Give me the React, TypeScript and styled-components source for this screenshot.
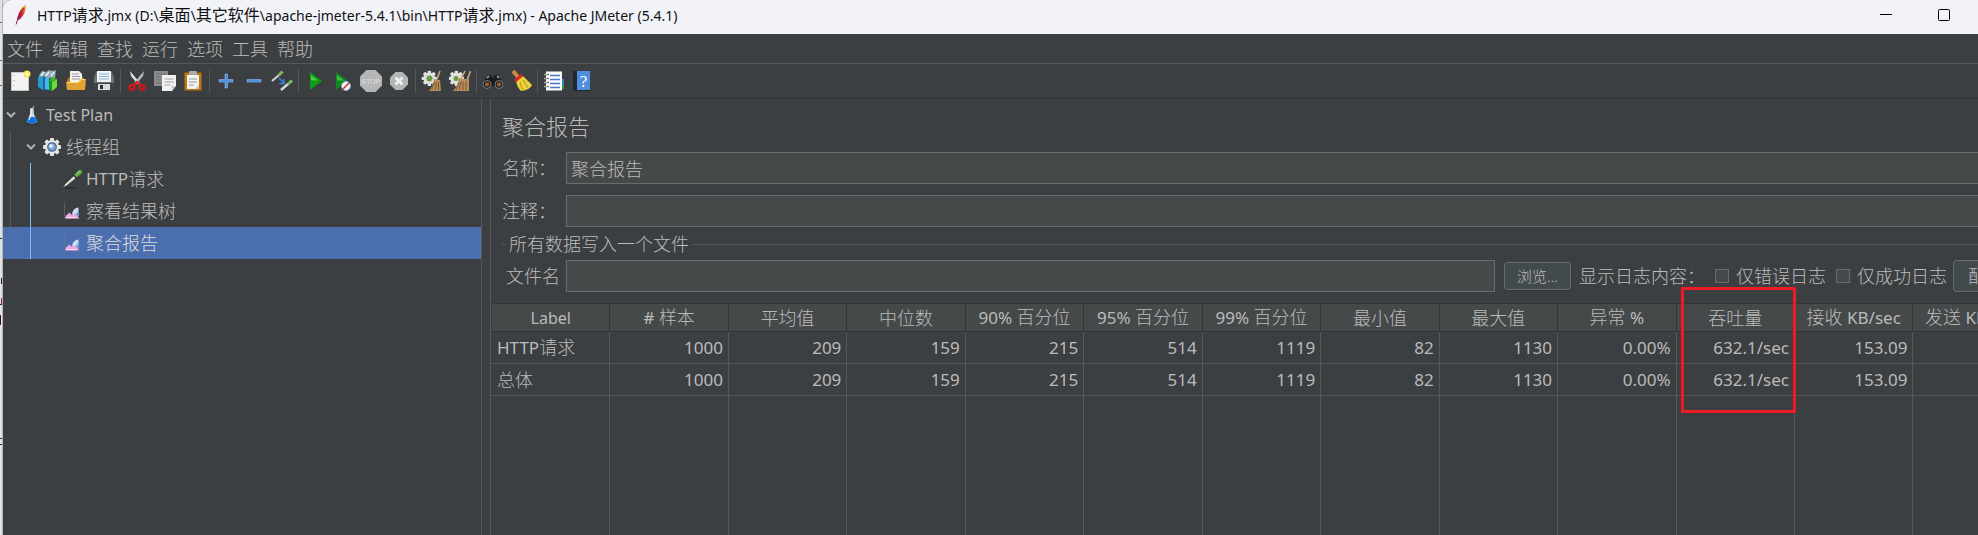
import React from "react";
import styled, { createGlobalStyle } from "styled-components";

const color = {
  base: "#3c3f41",
  field: "#45494a",
  header: "#45494a",
  line: "#555759",
  dark: "#323436",
  text: "#bbbbbb",
  border: "#6a6c6e",
  selected: "#4b6eaf",
};

const GlobalStyle = createGlobalStyle`
  *, *::before, *::after { box-sizing: border-box; }
  body {
    margin: 0;
    background: ${color.base};
    color: ${color.text};
    font-family: "Noto Sans", "Noto Sans CJK SC", sans-serif;
    font-size: 18px;
    font-weight: 300;
    line-height: 24px;
    overflow: hidden;
  }
  button, input { font: inherit; color: inherit; }
`;

const Desktop = styled.div`
  display: flex;
  height: 100vh;
  background: #e1e2e2;
`;

const Behind = styled.div`
  flex: 0 0 3px;
  border-right: 1px solid #b4b5b5;
  overflow: hidden;
  svg { display: block; }
`;

const Window = styled.div`
  flex: 1;
  min-width: 0;
  display: flex;
  flex-direction: column;
  background: ${color.base};
  border-top-left-radius: 8px;
  overflow: hidden;
`;

const TitleBar = styled.header`
  display: flex;
  align-items: center;
  height: 34px;
  padding: 0 5px 4px 9px;
  background: #f1f3f9;
  color: #111;
`;

const Title = styled.h1`
  flex: 1;
  margin: 0 0 0 5px;
  font-size: 16px;
  font-weight: 400;
  white-space: nowrap;
`;

const WindowButton = styled.button`
  width: 58px;
  height: 30px;
  padding: 0;
  border: 0;
  background: none;
  display: grid;
  place-items: center;
`;

const MenuBar = styled.nav`
  display: flex;
  gap: 9px;
  height: 30px;
  padding: 2px 4px;
  border-bottom: 1px solid ${color.line};
`;

const MenuItem = styled.button`
  padding: 0;
  border: 0;
  background: none;
  line-height: 24px;
`;

const ToolBar = styled.div`
  display: flex;
  align-items: center;
  height: 35px;
  padding: 0 3px;
  border-bottom: 1px solid ${color.dark};
`;

const ToolButton = styled.button`
  width: 28px;
  height: 28px;
  padding: 0;
  border: 0;
  background: none;
  display: grid;
  place-items: center;
  svg { display: block; }
`;

const Separator = styled.span`
  width: 1px;
  height: 24px;
  margin: 0 2px;
  background: ${color.line};
`;

const Main = styled.main`
  flex: 1;
  min-height: 0;
  display: flex;
`;

const TreePane = styled.aside`
  flex: 0 0 479px;
  border-right: 1px solid ${color.line};
`;

const Branch = styled.ul<{ $depth: number; $active?: boolean }>`
  position: relative;
  list-style: none;
  margin: 0;
  padding: 0;
  ${(p) =>
    p.$depth > 0 &&
    `&::before {
      content: "";
      position: absolute;
      top: 0;
      bottom: 0;
      left: ${p.$depth * 20 - 13}px;
      width: 1px;
      background: ${p.$active ? "#7ebcf5" : color.line};
    }`}
`;

const Node = styled.div<{ $depth: number; $selected?: boolean }>`
  display: flex;
  align-items: center;
  height: 32px;
  padding-left: ${(p) => p.$depth * 20}px;
  background: ${(p) => (p.$selected ? color.selected : "transparent")};
  color: ${(p) => (p.$selected ? "#dddddd" : color.text)};
`;

const Slot = styled.span<{ $width: number }>`
  flex: 0 0 ${(p) => p.$width}px;
  display: grid;
  place-items: center;
`;

const Latin = styled.span<{ $size: number }>`
  font-size: ${(p) => p.$size}px;
  font-weight: 400;
`;

const Content = styled.section`
  flex: 1;
  min-width: 0;
  margin-left: 8px;
  border-left: 1px solid ${color.line};
  overflow: hidden;
`;

const Sheet = styled.div`
  display: flex;
  flex-direction: column;
  width: calc(100% + 54px);
  height: 100%;
`;

const Form = styled.form`
  padding: 12px 13px 11px 11px;
`;

const Heading = styled.h2`
  margin: 0 0 11px;
  font-size: 22px;
  font-weight: 300;
  line-height: 30px;
`;

const FieldRow = styled.div`
  display: flex;
  align-items: center;
  margin-bottom: 11px;
`;

const FieldLabel = styled.label`
  flex: 0 0 64px;
`;

const TextInput = styled.input`
  flex: 1;
  min-width: 0;
  height: 32px;
  padding: 0 4px;
  border: 1px solid ${color.border};
  border-radius: 0;
  background: ${color.field};
  outline: none;
`;

const FileGroup = styled.fieldset`
  min-width: 0;
  margin: -6px 0 0;
  padding: 4px 0 0 4px;
  border: 0;
  border-top: 1px solid ${color.line};
`;

const Legend = styled.legend`
  padding: 0 3px;
`;

const FileRow = styled.div`
  display: flex;
  align-items: center;
  white-space: nowrap;
`;

const FileLabel = styled.label`
  flex: 0 0 60px;
`;

const PushButton = styled.button<{ $small?: boolean }>`
  flex: none;
  width: ${(p) => (p.$small ? 67 : 66)}px;
  height: ${(p) => (p.$small ? 28 : 32)}px;
  margin-left: ${(p) => (p.$small ? 9 : 6)}px;
  padding: 0;
  border: 1px solid ${color.border};
  border-radius: 3px;
  background: #434a4c;
  box-shadow: 0 1px 1px #333537;
  font-size: ${(p) => (p.$small ? 15 : 18)}px;
`;

const LogCaption = styled.span`
  margin-left: 8px;
`;

const CheckLabel = styled.label`
  display: flex;
  align-items: center;
  gap: 7px;
  margin-left: 10px;
`;

const CheckBox = styled.input`
  appearance: none;
  width: 14px;
  height: 14px;
  margin: 0;
  border: 1px solid ${color.border};
  background: #43494a;
`;

const TableArea = styled.div`
  flex: 1;
  min-height: 0;
  padding-left: 1px;
`;

const Table = styled.table`
  width: 100%;
  height: 100%;
  table-layout: fixed;
  border-collapse: separate;
  border-spacing: 0;
  border-top: 1px solid ${color.dark};
`;

const HeadCell = styled.th`
  position: relative;
  height: 28px;
  padding: 0;
  border-right: 1px solid ${color.dark};
  border-bottom: 1px solid ${color.dark};
  background: ${color.header};
  font-weight: 300;
  white-space: nowrap;
`;

const Cell = styled.td<{ $left?: boolean }>`
  height: 32px;
  padding: 0 5px;
  border-right: 1px solid ${color.line};
  border-bottom: 1px solid ${color.line};
  text-align: ${(p) => (p.$left ? "left" : "right")};
`;

const EmptyCell = styled.td`
  padding: 0;
  border-right: 1px solid ${color.line};
`;

const Highlight = styled.span`
  position: absolute;
  z-index: 1;
  top: -17px;
  left: 4px;
  width: 115px;
  height: 126px;
  border: 3px solid #ed1c24;
  pointer-events: none;
`;

/* Latin runs are set smaller than the Chinese characters beside them. */
function Mixed({ text, latin = 17 }: { text: string; latin?: number }) {
  return (
    <>
      {text
        .split(/([\x20-\x7e]+)/)
        .filter(Boolean)
        .map((run, i) =>
          /^[\x20-\x7e]/.test(run) ? <Latin key={i} $size={latin}>{run}</Latin> : run
        )}
    </>
  );
}

function Glyph({ children }: { children: React.ReactNode }) {
  return (
    <svg width="22" height="22" viewBox="0 0 22 22" fill="none" aria-hidden="true">
      {children}
    </svg>
  );
}

const Feather = () => (
  <svg width="20" height="22" viewBox="0 0 20 22" aria-hidden="true">
    <defs>
      <linearGradient id="feather" x1="0" y1="1" x2="0.6" y2="0">
        <stop offset="0" stopColor="#8a1f7a" />
        <stop offset="0.5" stopColor="#d0203a" />
        <stop offset="1" stopColor="#f5961c" />
      </linearGradient>
    </defs>
    <path d="M13.500 1C9.500 3 6 8.500 5 16l2.500-.5C11.500 12 14.500 6.500 13.500 1z" fill="url(#feather)" />
    <path d="M4 20.500C6 14 9 8 12 4" stroke="#7c1a4a" strokeWidth="1" fill="none" />
  </svg>
);

const Chevron = () => (
  <svg width="10" height="8" viewBox="0 0 10 8" fill="none" aria-hidden="true">
    <path d="M1 1.500l4 4 4-4" stroke="#afb1b3" strokeWidth="2" />
  </svg>
);

const Flask = () => (
  <Glyph>
    <ellipse cx="11" cy="19" rx="7" ry="1.500" fill="#2a2c2e" />
    <path d="M9.500 4h3l.5 6 3.500 8.500q-5.500 2-11 0L9 10z" fill="#c9d6e2" />
    <path d="M8 13h6l2.500 5.500q-5.500 2-11 0z" fill="#1477e0" />
    <path d="M10 5v6l-2 5" stroke="#fff" />
    <path d="M12 4l1-2" stroke="#8b9299" strokeWidth="1.500" />
  </Glyph>
);

const GearShape = ({ fill }: { fill: string }) => (
  <>
    {[0, 45, 90, 135].map((a) => (
      <rect key={a} x="9" y="2" width="4" height="18" rx="1" fill={fill} transform={`rotate(${a} 11 11)`} />
    ))}
    <circle cx="11" cy="11" r="7" fill={fill} />
  </>
);

const Gear = () => (
  <Glyph>
    <GearShape fill="#e4e5e6" />
    <circle cx="11" cy="11" r="4.800" fill="#35567f" />
    <circle cx="11" cy="11" r="3.800" fill="#7fa6d3" />
    <circle cx="10" cy="10" r="1.800" fill="#eaf3fc" />
  </Glyph>
);

const Pipette = () => (
  <Glyph>
    <path d="M4 20h12" stroke="#2a2c2e" strokeWidth="1.500" />
    <path d="M2 19L13 8l2 2L5 18z" fill="#c8cac9" />
    <path d="M4 17l9-8" stroke="#fff" />
    <path d="M12 6.500l4 4" stroke="#222" strokeWidth="1.500" />
    <path d="M13 7l4-4q2-2 3.500-.5t0 3l-5 4z" fill="#5fae45" />
    <path d="M15.500 6l3-3" stroke="#b6e09f" />
  </Glyph>
);

const ChartIcon = () => (
  <Glyph>
    <path d="M3.500 3v15.500H19" stroke="#777a7c" strokeDasharray="1 1" />
    <path d="M11 14q1-6 6.500-6.500V16L15 18z" fill="#c9ddf7" />
    <path d="M14 15l3.500-4v6z" fill="#6e9bd8" />
    <path d="M4.500 18.500V16l4-3.500 2.500 2.500 2-1.500 4.500 3.500v1.500z" fill="#f2a6e0" />
    <path d="M5 17.500h10" stroke="#fbdcf4" />
  </Glyph>
);

const icons: Record<string, React.ReactNode> = {
  新建: (
    <>
      <rect x="2.500" y="2.500" width="17" height="18" fill="#f3f3f2" stroke="#c6c6c4" />
      <path d="M5 5v14" stroke="#999" strokeDasharray="1 4" />
      <circle cx="18" cy="4" r="3.500" fill="#f5e94e" />
      <circle cx="18" cy="4" r="1.500" fill="#fffde0" />
    </>
  ),
  模板: (
    <>
      <path d="M2 5l3-4 4 1 3-2 4 1 3-1-1 8H3z" fill="#8fa9b6" />
      <path d="M4 6l3-4M9 6l3-4M14 6l3-4" stroke="#e9f1f5" strokeWidth="1.500" />
      <path d="M1 7l5-1v14l-5-3z" fill="#2c9ad0" />
      <path d="M6 6l4 2v12H6z" fill="#176899" />
      <path d="M8 8h4v12l-4-1z" fill="#48b6e6" />
      <path d="M12 10l3 2v9l-3-1z" fill="#15922a" />
      <path d="M15 12l5-3v8l-5 4z" fill="#6bdc3c" />
      <path d="M12 10l4-3 4 2-5 3z" fill="#3bb52a" />
    </>
  ),
  打开: (
    <>
      <path d="M2 10l3-4h12l3 4v10H2z" fill="#b97a16" />
      <path d="M5 1h9l3 3v8H5z" fill="#f2f2f0" />
      <path d="M7 4h7M7 6.500h8M7 9h8" stroke="#9a9a9a" />
      <path d="M1 12h12l3-3h5l-1 11H2z" fill="#dfa233" />
      <path d="M2 12.500h11.500l3-3H20" stroke="#ffd777" />
    </>
  ),
  保存: (
    <>
      <path d="M1 8l2-6h16l2 6v13H1z" fill="#6d7174" />
      <rect x="4" y="1" width="14" height="11" fill="#eef3f8" />
      <path d="M6 4h10M6 6.500h10M6 9h10" stroke="#8fb0d3" />
      <path d="M1 13h20v8H1z" fill="#3f4345" />
      <rect x="5" y="14" width="12" height="6" fill="#d9dadb" />
      <rect x="7" y="15" width="3" height="4" fill="#2c2f31" />
    </>
  ),
  剪切: (
    <>
      <path d="M4 1l10 12-2 1.500L5 6z" fill="#dfe1e2" />
      <path d="M18 1L8 13l2 1.500L17 6z" fill="#b9bcbe" />
      <ellipse cx="6" cy="17.500" rx="2.500" ry="2.300" stroke="#d81414" strokeWidth="2.200" />
      <ellipse cx="16" cy="17.500" rx="2.500" ry="2.300" stroke="#d81414" strokeWidth="2.200" />
      <path d="M7 15l4-3 4 3" stroke="#d81414" strokeWidth="2" />
    </>
  ),
  复制: (
    <>
      <path d="M0 1h14v15H0z" fill="#8a8c8d" />
      <path d="M2 4h10M2 7h5M2 10h5M2 13h5" stroke="#6b6d6e" />
      <path d="M8 5h14v11l-4 5H8z" fill="#f1f1f0" />
      <path d="M10.500 9h9M10.500 12h9M10.500 15h6" stroke="#a0a2a3" />
      <path d="M18 21v-5h4z" fill="#c2c4c5" />
    </>
  ),
  粘贴: (
    <>
      <rect x="2.500" y="2.500" width="17" height="18" rx="1" fill="#b9771c" stroke="#8a5410" />
      <rect x="5" y="5" width="12" height="14" fill="#f3f3f1" />
      <path d="M7 9h8M7 12h8M7 15h5" stroke="#9a9a9a" />
      <rect x="7" y="1" width="8" height="4" rx="1" fill="#a7aaad" />
      <path d="M13 19l4-4v4z" fill="#c5c5c0" />
    </>
  ),
  展开: <path d="M10 4h2.500v5.500H18V12h-5.500v6H10v-6H4V9.500h6z" fill="#4f8fe0" stroke="#8db9f0" strokeWidth="0.600" />,
  折叠: <path d="M4 9.500h14V12H4z" fill="#4f8fe0" stroke="#8db9f0" strokeWidth="0.600" />,
  切换: (
    <>
      <path d="M1 11l7-6" stroke="#d6d8d5" strokeWidth="2" />
      <path d="M8 5l3.500-3.500" stroke="#7ebb60" strokeWidth="3" />
      <path d="M10 20l7-6" stroke="#d6d8d5" strokeWidth="2.500" />
      <path d="M16.500 14.500l4.500-4" stroke="#7ebb60" strokeWidth="3" />
      <path d="M8 8l5 5m0-4v4.500H8.500" stroke="#3b82e0" strokeWidth="1.500" />
    </>
  ),
  启动: (
    <>
      <path d="M6 2l12 9-12 9z" fill="#0d9a16" />
      <path d="M7 5l7 5.500H7z" fill="#4ccb45" />
    </>
  ),
  不停顿开始: (
    <>
      <path d="M4 2l12 9-12 9z" fill="#0d8a20" />
      <path d="M5 5l7 5.500H5z" fill="#43b94a" />
      <circle cx="14" cy="16" r="4.500" fill="#f2f4f8" stroke="#8fa9d6" />
      <path d="M11 19l6-6" stroke="#d02828" strokeWidth="1.500" />
    </>
  ),
  停止: (
    <>
      <path d="M6.500 0h9L22 6.500v9L15.500 22h-9L0 15.500v-9z" fill="#b5b6b6" />
      <text x="11" y="14" textAnchor="middle" fontSize="7" fontWeight="700" fontFamily="Liberation Sans, sans-serif" fill="#d4d5d5">STOP</text>
    </>
  ),
  关闭: (
    <>
      <path d="M7.500 2h7L20 7.500v7L14.500 20h-7L2 14.500v-7z" fill="#b5b6b6" />
      <path d="M7.500 7.500l7 7m0-7l-7 7" stroke="#eeeeee" strokeWidth="3" />
    </>
  ),
  清除: (
    <>
      <g transform="translate(-1 -1) scale(.85)"><GearShape fill="#dfe0df" /></g>
      <circle cx="8.500" cy="8.500" r="3" fill="#6c9b3e" />
      <path d="M19 1l-3 8" stroke="#d3b083" strokeWidth="1.500" />
      <path d="M13 9l6 1 1 11H8q4-5 5-12z" fill="#b48b5a" />
      <path d="M13.500 12l-3 8m5-8l-1 8m3-8v8" stroke="#7f5a30" />
    </>
  ),
  清除全部: (
    <>
      <g transform="translate(-2 -1) scale(.85)"><GearShape fill="#dfe0df" /></g>
      <circle cx="7" cy="8.500" r="2.500" fill="#6c9b3e" />
      <path d="M16 1l-4 8M21.500 1l-3 8" stroke="#d3b083" strokeWidth="1.500" />
      <path d="M10 8l5 1h5v12H4q5-5 6-13z" fill="#b48b5a" />
      <path d="M10 12l-3 8m5-8l-2 8m4-8v8m3-9v9" stroke="#7f5a30" />
    </>
  ),
  查找: (
    <>
      <path d="M2 11l4-6h3l2 3 2-3h3l4 6v5H2z" fill="#1b1c1d" />
      <path d="M5 8l2-2m8 0l2 2" stroke="#a5a8aa" strokeWidth="1.500" />
      <circle cx="5" cy="14.500" r="4" fill="#2b2520" stroke="#77797b" />
      <circle cx="17" cy="14.500" r="4" fill="#2b2520" stroke="#77797b" />
      <circle cx="5" cy="14.500" r="2" fill="#a9602b" />
      <circle cx="17" cy="14.500" r="2" fill="#a9602b" />
    </>
  ),
  重置查找: (
    <>
      <path d="M3 1l5 6" stroke="#c58a3c" strokeWidth="4" />
      <path d="M6 11l7-5 9 9q-2 5-11 6-4-4-5-10z" fill="#ecd13c" />
      <path d="M10 12l3 9m0-11l5 8" stroke="#b1951a" />
      <path d="M5 11l7-6" stroke="#d52828" strokeWidth="3" />
    </>
  ),
  函数助手: (
    <>
      <path d="M18 9h3v6h-3z" fill="#2f7fe0" />
      <path d="M18 15h3v4h-3z" fill="#1fa43a" />
      <rect x="3" y="1.500" width="16" height="19" fill="#fafafa" />
      <path d="M7 5.500h10M7 9.500h10M7 13.500h10M7 17.500h10" stroke="#4a79c4" strokeWidth="1.500" />
      <path d="M1 4.500h5M1 8.500h5M1 12.500h5M1 16.500h5" stroke="#a8aaab" strokeWidth="1.500" />
      <path d="M5 4v15" stroke="#333" strokeDasharray="1 3" />
    </>
  ),
  帮助: (
    <>
      <path d="M2 1h17v20H3q-1 0-1-2z" fill="#1f2733" />
      <path d="M6 1h13v19H6z" fill="#4e8de0" />
      <text x="12.500" y="17" textAnchor="middle" fontSize="17" fontFamily="Liberation Serif, serif" fill="#fff">?</text>
    </>
  ),
};

const toolGroups = [
  ["新建", "模板", "打开", "保存"],
  ["剪切", "复制", "粘贴"],
  ["展开", "折叠", "切换"],
  ["启动", "不停顿开始", "停止", "关闭"],
  ["清除", "清除全部"],
  ["查找", "重置查找"],
  ["函数助手", "帮助"],
];

const menus = ["文件", "编辑", "查找", "运行", "选项", "工具", "帮助"];

const columns = [
  "Label", "# 样本", "平均值", "中位数", "90% 百分位", "95% 百分位", "99% 百分位",
  "最小值", "最大值", "异常 %", "吞吐量", "接收 KB/sec", "发送 KB/sec",
];

const rows = [
  ["HTTP请求", "1000", "209", "159", "215", "514", "1119", "82", "1130", "0.00%", "632.1/sec", "153.09", ""],
  ["总体", "1000", "209", "159", "215", "514", "1119", "82", "1130", "0.00%", "632.1/sec", "153.09", ""],
];

function TreeNode(props: {
  depth: number;
  icon: React.ReactNode;
  open?: boolean;
  selected?: boolean;
  children: React.ReactNode;
}) {
  return (
    <Node $depth={props.depth} $selected={props.selected}>
      <Slot $width={15}>{props.open && <Chevron />}</Slot>
      <Slot $width={28}>{props.icon}</Slot>
      {props.children}
    </Node>
  );
}

export default function App() {
  return (
    <>
      <GlobalStyle />
      <Desktop>
        <Behind>
          <svg width="2" height="535" viewBox="0 0 2 535" aria-hidden="true">
            <path d="M0 22.500h2M0 60.500h2M0 85.500h2" stroke="#6b6b6b" />
            <path d="M0 238.500h2M0 304.500h2M0 438.500h2M0 444.500h2" stroke="#1c2340" />
            <path d="M1 278h1v6H1zM0 315h1v10H0z" fill="#3a0c3a" />
            <path d="M1 298h1v6H1z" fill="#8c1c3c" />
          </svg>
        </Behind>
        <Window>
          <TitleBar>
            <Feather />
            <Title>
              <Mixed
                latin={14}
                text={"HTTP请求.jmx (D:\\桌面\\其它软件\\apache-jmeter-5.4.1\\bin\\HTTP请求.jmx) - Apache JMeter (5.4.1)"}
              />
            </Title>
            <WindowButton aria-label="最小化">
              <svg width="12" height="12" viewBox="0 0 12 12"><path d="M0 5.500h12" stroke="#000" /></svg>
            </WindowButton>
            <WindowButton aria-label="最大化">
              <svg width="12" height="12" viewBox="0 0 12 12"><rect x=".5" y=".5" width="11" height="11" rx="1" fill="none" stroke="#000" /></svg>
            </WindowButton>
          </TitleBar>
          <MenuBar>
            {menus.map((m) => (
              <MenuItem key={m}>{m}</MenuItem>
            ))}
          </MenuBar>
          <ToolBar role="toolbar">
            {toolGroups.map((group, i) => (
              <React.Fragment key={i}>
                {i > 0 && <Separator />}
                {group.map((name) => (
                  <ToolButton key={name} aria-label={name}>
                    <Glyph>{icons[name]}</Glyph>
                  </ToolButton>
                ))}
              </React.Fragment>
            ))}
          </ToolBar>
          <Main>
            <TreePane>
              <Branch $depth={0}>
                <li>
                  <TreeNode depth={0} icon={<Flask />} open><Mixed text="Test Plan" latin={16} /></TreeNode>
                  <Branch $depth={1}>
                    <li>
                      <TreeNode depth={1} icon={<Gear />} open>线程组</TreeNode>
                      <Branch $depth={2} $active>
                        <li><TreeNode depth={2} icon={<Pipette />}><Mixed text="HTTP请求" /></TreeNode></li>
                        <li><TreeNode depth={2} icon={<ChartIcon />}>察看结果树</TreeNode></li>
                        <li><TreeNode depth={2} icon={<ChartIcon />} selected>聚合报告</TreeNode></li>
                      </Branch>
                    </li>
                  </Branch>
                </li>
              </Branch>
            </TreePane>
            <Content>
              <Sheet>
                <Form onSubmit={(e) => e.preventDefault()}>
                  <Heading>聚合报告</Heading>
                  <FieldRow>
                    <FieldLabel htmlFor="name">名称：</FieldLabel>
                    <TextInput id="name" defaultValue="聚合报告" />
                  </FieldRow>
                  <FieldRow>
                    <FieldLabel htmlFor="comment">注释：</FieldLabel>
                    <TextInput id="comment" />
                  </FieldRow>
                  <FileGroup>
                    <Legend>所有数据写入一个文件</Legend>
                    <FileRow>
                      <FileLabel htmlFor="file">文件名</FileLabel>
                      <TextInput id="file" />
                      <PushButton type="button" $small>浏览...</PushButton>
                      <LogCaption>显示日志内容：</LogCaption>
                      <CheckLabel><CheckBox type="checkbox" />仅错误日志</CheckLabel>
                      <CheckLabel><CheckBox type="checkbox" />仅成功日志</CheckLabel>
                      <PushButton type="button">配置</PushButton>
                    </FileRow>
                  </FileGroup>
                </Form>
                <TableArea>
                  <Table>
                    <thead>
                      <tr>
                        {columns.map((c) => (
                          <HeadCell key={c}>
                            <Mixed text={c} latin={c === "Label" ? 16 : 17} />
                            {c === "吞吐量" && <Highlight />}
                          </HeadCell>
                        ))}
                      </tr>
                    </thead>
                    <tbody>
                      {rows.map((r) => (
                        <tr key={r[0]}>
                          {r.map((v, i) => (
                            <Cell key={i} $left={i === 0}><Mixed text={v} /></Cell>
                          ))}
                        </tr>
                      ))}
                      <tr>
                        {columns.map((c) => (
                          <EmptyCell key={c} />
                        ))}
                      </tr>
                    </tbody>
                  </Table>
                </TableArea>
              </Sheet>
            </Content>
          </Main>
        </Window>
      </Desktop>
    </>
  );
}
